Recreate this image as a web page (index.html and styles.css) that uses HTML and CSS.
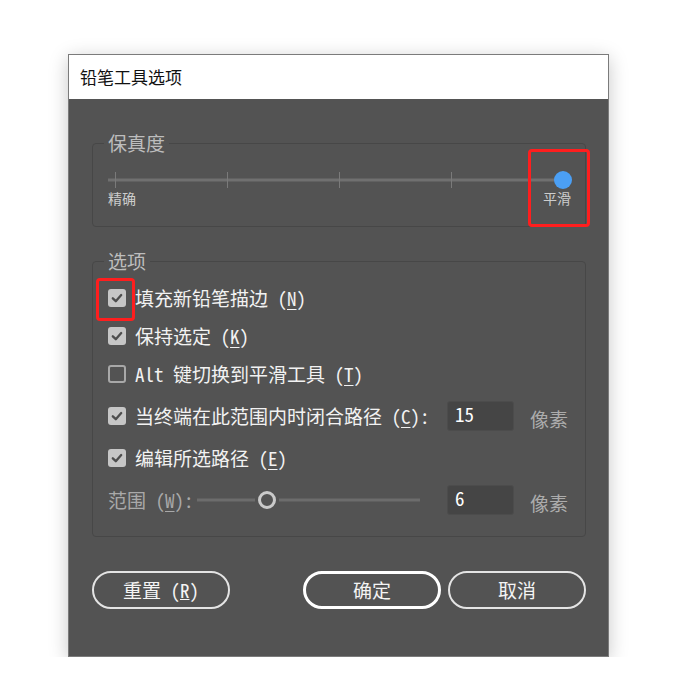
FILE: index.html
```html
<!DOCTYPE html>
<html lang="zh-CN">
<head>
<meta charset="utf-8">
<title>铅笔工具选项</title>
<link rel="stylesheet" href="styles.css">
</head>
<body>
<div class="dialog">
  <div class="titlebar">铅笔工具选项</div>
  <div class="content">
    <fieldset class="group group-fidelity">
      <legend>保真度</legend>
      <svg class="fid-slider" width="470" height="18" viewBox="0 0 470 18">
        <line x1="0" y1="9" x2="455" y2="9" stroke="#707070" stroke-width="3"/>
        <line x1="7.5" y1="1" x2="7.5" y2="17" stroke="#7a7a7a" stroke-width="1"/>
        <line x1="119.5" y1="1" x2="119.5" y2="17" stroke="#7a7a7a" stroke-width="1"/>
        <line x1="231.5" y1="1" x2="231.5" y2="17" stroke="#7a7a7a" stroke-width="1"/>
        <line x1="343.5" y1="1" x2="343.5" y2="17" stroke="#7a7a7a" stroke-width="1"/>
        <circle cx="455" cy="9" r="9" fill="#4b9ff4"/>
      </svg>
      <div class="fid-labels"><span>精确</span><span>平滑</span></div>
    </fieldset>

    <fieldset class="group group-options">
      <legend>选项</legend>
      <div class="rows">
        <div class="row">
          <span class="cb checked"><svg width="18" height="18" viewBox="0 0 18 18"><path d="M4.8 9.3 L7.8 12.2 L13.2 6" fill="none" stroke="#4d4d4d" stroke-width="2.3" stroke-linecap="round" stroke-linejoin="round"/></svg></span>
          <span class="lbl">填充新铅笔描边 (<u>N</u>)</span>
        </div>
        <div class="row">
          <span class="cb checked"><svg width="18" height="18" viewBox="0 0 18 18"><path d="M4.8 9.3 L7.8 12.2 L13.2 6" fill="none" stroke="#4d4d4d" stroke-width="2.3" stroke-linecap="round" stroke-linejoin="round"/></svg></span>
          <span class="lbl">保持选定 (<u>K</u>)</span>
        </div>
        <div class="row">
          <span class="cb"></span>
          <span class="lbl">Alt 键切换到平滑工具 (<u>T</u>)</span>
        </div>
        <div class="row row-field">
          <div class="field-label">
            <span class="cb checked"><svg width="18" height="18" viewBox="0 0 18 18"><path d="M4.8 9.3 L7.8 12.2 L13.2 6" fill="none" stroke="#4d4d4d" stroke-width="2.3" stroke-linecap="round" stroke-linejoin="round"/></svg></span>
            <span class="lbl">当终端在此范围内时闭合路径 (<u>C</u>):</span>
          </div>
          <div class="num">15</div>
          <span class="unit">像素</span>
        </div>
        <div class="row">
          <span class="cb checked"><svg width="18" height="18" viewBox="0 0 18 18"><path d="M4.8 9.3 L7.8 12.2 L13.2 6" fill="none" stroke="#4d4d4d" stroke-width="2.3" stroke-linecap="round" stroke-linejoin="round"/></svg></span>
          <span class="lbl">编辑所选路径 (<u>E</u>)</span>
        </div>
        <div class="row row-field">
          <div class="field-label">
            <span class="lbl dim">范围 (<u>W</u>):</span>
            <svg class="range-slider" width="223" height="20" viewBox="0 0 223 20">
              <line x1="0" y1="10" x2="58" y2="10" stroke="#6c6c6c" stroke-width="3"/>
              <line x1="82" y1="10" x2="223" y2="10" stroke="#6c6c6c" stroke-width="3"/>
              <circle cx="70" cy="10" r="7.5" fill="none" stroke="#cacaca" stroke-width="3"/>
            </svg>
          </div>
          <div class="num">6</div>
          <span class="unit">像素</span>
        </div>
      </div>
    </fieldset>

    <div class="buttons">
      <button class="btn">重置 (<u>R</u>)</button>
      <span class="spacer"></span>
      <button class="btn btn-primary">确定</button>
      <button class="btn">取消</button>
    </div>
  </div>
  <div class="mark mark-slider"></div>
  <div class="mark mark-check"></div>
</div>
</body>
</html>
```

FILE: styles.css
```css
html, body {
  margin: 0;
  padding: 0;
  background: #ffffff;
}

body {
  font-family: "Noto Sans Mono CJK SC", "Noto Sans CJK SC", sans-serif;
}

.dialog {
  position: relative;
  width: 539px;
  margin: 54px 0 0 68px;
  border: 1px solid #7b7b7b;
  box-shadow: 0 4px 18px rgba(0, 0, 0, 0.22);
}

.titlebar {
  height: 44px;
  background: #ffffff;
  color: #111111;
  font-family: "Noto Sans CJK SC", sans-serif;
  font-size: 17px;
  line-height: 44px;
  padding-left: 11px;
}

.content {
  background: #535353;
  padding: 34px 22px 47px 23px;
}

.group {
  margin: 0;
  padding: 0 15px;
  min-width: 0;
  border: 1px solid #474747;
  border-radius: 4px;
}

.group legend {
  font-family: "Noto Sans CJK SC", sans-serif;
  font-size: 19px;
  line-height: 20px;
  color: #bdbdbd;
  padding: 0 4px;
  margin-left: -4px;
}

.group-fidelity {
  padding-bottom: 20px;
}

.fid-slider {
  display: block;
  margin-top: 18px;
}

.fid-labels {
  display: flex;
  justify-content: space-between;
  width: 463px;
  margin-top: 1px;
  font-family: "Noto Sans CJK SC", sans-serif;
  font-size: 14px;
  line-height: 16px;
  color: #cdcdcd;
}

.group-options {
  margin-top: 24px;
  padding-bottom: 17px;
}

.rows {
  display: flex;
  flex-direction: column;
  gap: 8px;
  margin-top: 12px;
}

.row {
  display: flex;
  align-items: center;
  height: 30px;
  font-size: 19px;
  color: #f2f2f2;
}

.row-field {
  display: grid;
  grid-template-columns: 323px 67px auto;
  grid-template-rows: 38px;
  column-gap: 16px;
  height: 38px;
}

.field-label {
  display: flex;
  align-items: center;
}

.lbl {
  white-space: nowrap;
  line-height: 30px;
}

.lbl u {
  text-underline-offset: 3px;
}

.lbl.dim {
  color: #a9a9a9;
}

.cb {
  box-sizing: border-box;
  flex: none;
  width: 18px;
  height: 18px;
  margin-right: 9px;
  border: 2px solid #a8a8a8;
  border-radius: 3px;
}

.cb.checked {
  border: none;
  background: #c6c6c6;
}

.cb svg {
  display: block;
}

.range-slider {
  display: block;
  flex: none;
  margin-left: auto;
  margin-right: 11px;
}

.num {
  box-sizing: border-box;
  height: 30px;
  background: #454545;
  border: 1px solid #4c4c4c;
  border-radius: 3px;
  padding: 0 7px;
  font-size: 19px;
  line-height: 24px;
  color: #ffffff;
}

.unit {
  white-space: nowrap;
  color: #acacac;
  font-size: 19px;
  line-height: 30px;
  position: relative;
  top: 3px;
}

.buttons {
  display: flex;
  gap: 7px;
  margin-top: 34px;
}

.spacer {
  flex: 1;
}

.btn {
  box-sizing: border-box;
  width: 138px;
  height: 38px;
  border: 2px solid #e4e4e4;
  border-radius: 19px;
  background: transparent;
  color: #f4f4f4;
  font-family: "Noto Sans Mono CJK SC", "Noto Sans CJK SC", sans-serif;
  font-size: 19px;
  line-height: 30px;
  padding: 0;
}

.btn-primary {
  border: 3px solid #ffffff;
}

.mark {
  position: absolute;
  box-sizing: border-box;
  border: 3px solid #ff1e1e;
  border-radius: 4px;
}

.mark-slider {
  left: 459px;
  top: 94px;
  width: 62px;
  height: 78px;
}

.mark-check {
  left: 27px;
  top: 223px;
  width: 39px;
  height: 43px;
}
```
